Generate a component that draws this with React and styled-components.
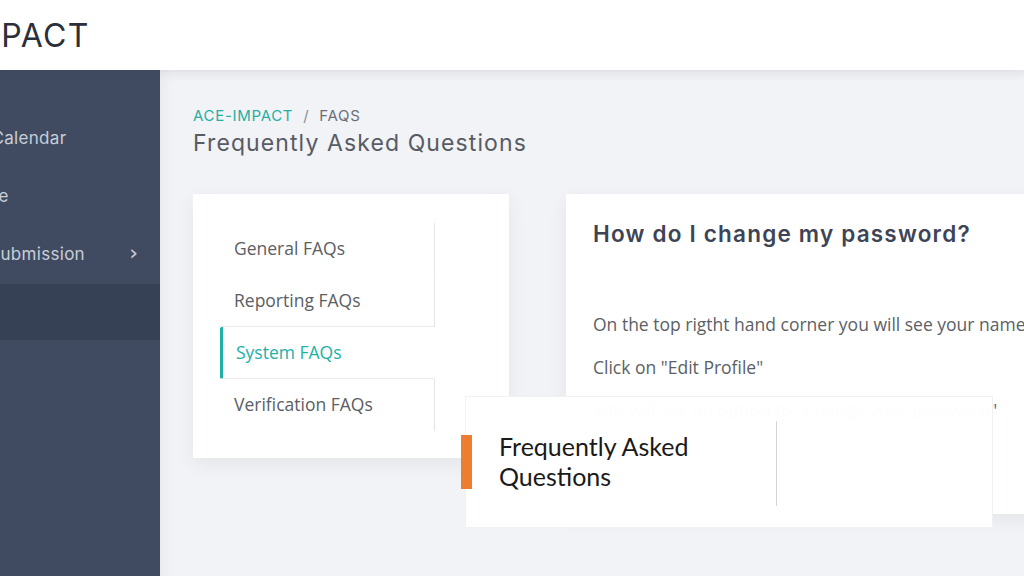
import React from "react";
import styled, { createGlobalStyle } from "styled-components";

const GlobalStyle = createGlobalStyle`
	html, body {
		margin: 0;
		padding: 0;
		background: #f2f3f6;
	}
	* {
		box-sizing: border-box;
	}
`;

const sideLinks = [
	{ label: "Event Calendar", shift: -60 },
	{ label: "Profile", shift: -45 },
	{ label: "Data Submission", shift: -54, arrow: true },
	{ label: "FAQs", shift: -46, active: true }
];

const tabs = [
	{ label: "General FAQs" },
	{ label: "Reporting FAQs" },
	{ label: "System FAQs", active: true },
	{ label: "Verification FAQs" }
];

export default function App() {
	return (
		<StyledPage>
			<GlobalStyle />
			<StyledHeader>
				<StyledLogo>ACE-IMPACT</StyledLogo>
			</StyledHeader>
			<StyledBody>
				<StyledSidebar>
					{sideLinks.map(link => (
						<StyledSideLink key={link.label} $active={link.active}>
							<StyledSideLabel $shift={link.shift} $hidden={link.active}>
								{link.label}
							</StyledSideLabel>
							{link.arrow && <StyledChevron>›</StyledChevron>}
						</StyledSideLink>
					))}
				</StyledSidebar>
				<StyledMain>
					<StyledCrumbs>
						<span className="home">ACE-IMPACT</span>
						<span className="sep">/</span>
						<span>FAQS</span>
					</StyledCrumbs>
					<StyledTitle>Frequently Asked Questions</StyledTitle>
					<StyledCards>
						<StyledTabCard>
							<StyledTabList>
								{tabs.map(tab => (
									<StyledTab key={tab.label} $active={tab.active}>
										{tab.label}
									</StyledTab>
								))}
							</StyledTabList>
						</StyledTabCard>
						<StyledAnswer>
							<h3>How do I change my password?</h3>
							<p>On the top rigtht hand corner you will see your name and profile picture</p>
							<p>Click on "Edit Profile"</p>
							<p>You will see an option to "Change your password"</p>
						</StyledAnswer>
					</StyledCards>
					<StyledSlideBox>
						<StyledSlideTitle>
							Frequently Asked
							<br />
							Questions
						</StyledSlideTitle>
						<StyledSlideDivider />
					</StyledSlideBox>
				</StyledMain>
			</StyledBody>
		</StyledPage>
	);
}

const StyledPage = styled.div`
	width: 1024px;
	height: 576px;
	overflow: hidden;
	display: flex;
	flex-direction: column;
	background: #f2f3f6;
`;

const StyledHeader = styled.header`
	height: 70px;
	flex-shrink: 0;
	background: #fff;
	display: flex;
	align-items: center;
	overflow: hidden;
	position: relative;
	z-index: 2;
	box-shadow: 0 2px 10px rgba(40, 50, 70, 0.06);
`;

const StyledLogo = styled.div`
	font-family: Inter, "Liberation Sans", sans-serif;
	font-size: 32px;
	font-weight: 400;
	letter-spacing: 1.4px;
	color: #2a2f3b;
	margin-left: -123px;
	padding-top: 1px;
	white-space: nowrap;
`;

const StyledBody = styled.div`
	flex: 1;
	display: flex;
	min-height: 0;
`;

const StyledSidebar = styled.nav`
	width: 160px;
	flex-shrink: 0;
	background: #404b61;
	padding-top: 39px;
	overflow: hidden;
`;

const StyledSideLink = styled.div`
	display: flex;
	align-items: center;
	justify-content: space-between;
	padding-right: 22px;
	background: ${p => (p.$active ? "#374155" : "transparent")};
	margin-top: ${p => (p.$active ? "1px" : "0")};
	height: ${p => (p.$active ? "56px" : "58px")};
`;

const StyledSideLabel = styled.span`
	font-family: Inter, "Liberation Sans", sans-serif;
	font-size: 17px;
	letter-spacing: 0.3px;
	color: #c9ced7;
	white-space: nowrap;
	margin-left: ${p => p.$shift}px;
	visibility: ${p => (p.$hidden ? "hidden" : "visible")};
`;

const StyledChevron = styled.span`
	font-family: "DejaVu Sans", sans-serif;
	font-size: 22px;
	color: #c9ced7;
	line-height: 1;
	margin-top: -3px;
`;

const StyledMain = styled.main`
	flex: 1;
	position: relative;
	padding: 34px 0 0 33px;
	background: #f2f3f6;
	box-shadow: inset 8px 8px 16px -8px rgba(40, 50, 70, 0.08);
`;

const StyledCrumbs = styled.div`
	font-family: Inter, "Liberation Sans", sans-serif;
	font-size: 15px;
	letter-spacing: 0.7px;
	color: #6b6f78;
	display: flex;
	gap: 10px;
	height: 22px;
	align-items: center;

	.home {
		color: #28aea3;
	}

	.sep {
		color: #8a8e96;
	}
`;

const StyledTitle = styled.h1`
	margin: 0;
	font-family: Inter, "Liberation Sans", sans-serif;
	font-size: 23px;
	font-weight: 400;
	letter-spacing: 1.1px;
	color: #575b63;
	line-height: 34px;
`;

const StyledCards = styled.div`
	display: flex;
	align-items: flex-start;
	gap: 57px;
	margin-top: 34px;
`;

const StyledTabCard = styled.section`
	width: 316px;
	height: 264px;
	flex-shrink: 0;
	background: #fff;
	padding: 29px 0 0 27px;
	box-shadow: 0 6px 18px rgba(40, 50, 70, 0.07);
`;

const StyledTabList = styled.ul`
	list-style: none;
	margin: 0;
	padding: 0;
	width: 215px;
`;

const StyledTab = styled.li`
	height: 52px;
	display: flex;
	align-items: center;
	padding-left: ${p => (p.$active ? "13px" : "14px")};
	padding-bottom: 2px;
	font-family: "Open Sans", "Liberation Sans", sans-serif;
	font-size: 17.5px;
	color: ${p => (p.$active ? "#22b1a8" : "#5b5e63")};
	border-right: 1px solid ${p => (p.$active ? "transparent" : "#e4e5e8")};
	border-bottom: 1px solid #e9eaed;
	border-left: ${p => (p.$active ? "3px solid #1fb0a7" : "0")};
	border-radius: ${p => (p.$active ? "2px 0 0 2px" : "0")};

	&:first-child {
		border-bottom-color: transparent;
	}

	&:last-child {
		border-bottom: 0;
	}
`;

const StyledAnswer = styled.section`
	flex: 1;
	min-width: 480px;
	height: 320px;
	background: #fff;
	padding: 24px 0 0 27px;
	box-shadow: 0 6px 18px rgba(40, 50, 70, 0.07);
	white-space: nowrap;
	overflow: hidden;

	h3 {
		margin: 0 0 62px;
		font-family: Inter, "Liberation Sans", sans-serif;
		font-size: 22.5px;
		font-weight: 600;
		letter-spacing: 1.2px;
		color: #3d4455;
		line-height: 32px;
	}

	p {
		margin: 0 0 19px;
		font-family: "Open Sans", "Liberation Sans", sans-serif;
		font-size: 17.5px;
		color: #5c5f65;
		line-height: 24px;
	}
`;

const StyledSlideBox = styled.div`
	position: absolute;
	left: 305px;
	top: 326px;
	width: 528px;
	height: 132px;
	background: rgba(255, 255, 255, 0.985);
	border: 1px solid rgba(230, 232, 236, 0.6);
	display: flex;
	align-items: flex-start;
	padding: 24px 0 0 0;
`;

const StyledSlideTitle = styled.div`
	position: relative;
	width: 310px;
	padding: 10px 0 0 33px;
	font-family: Lato, "Liberation Sans", sans-serif;
	font-size: 25px;
	line-height: 30px;
	color: #1a1a1a;

	&::before {
		content: "";
		position: absolute;
		left: -5px;
		top: 14px;
		width: 11px;
		height: 54px;
		background: #ed7d31;
	}
`;

const StyledSlideDivider = styled.div`
	width: 1px;
	height: 85px;
	background: #d4d4d4;
`;
